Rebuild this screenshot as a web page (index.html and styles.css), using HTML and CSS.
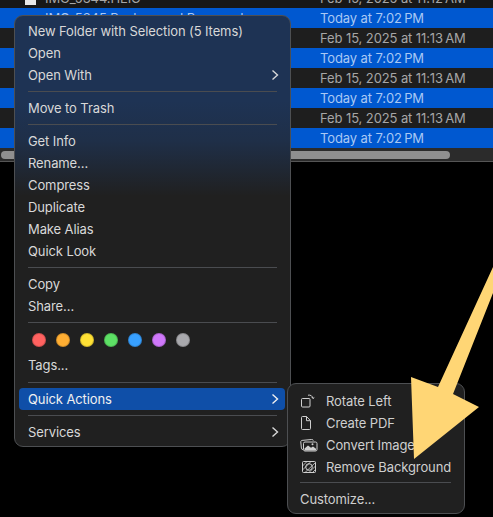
FILE: index.html
```html
<!DOCTYPE html>
<html>
	<head>
		<meta charset="utf-8" />
		<meta name="viewport" content="width=device-width" />
		<title>Finder context menu</title>
		<link rel="stylesheet" href="styles.css">
	</head>
	<body>
		<div class="files">
			<div class="row row-top"><span class="file-icon"></span><span class="name">IMG_5344.HEIC</span><span class="date">Feb 15, 2025 at 11:12&#8201;AM</span></div>
			<div class="row selected"><span class="name">IMG_5345 Background Removed</span><span class="date">Today at 7:02&#8201;PM</span></div>
			<div class="row"><span class="name"></span><span class="date">Feb 15, 2025 at 11:13&#8201;AM</span></div>
			<div class="row selected"><span class="name"></span><span class="date">Today at 7:02&#8201;PM</span></div>
			<div class="row"><span class="name"></span><span class="date">Feb 15, 2025 at 11:13&#8201;AM</span></div>
			<div class="row selected"><span class="name"></span><span class="date">Today at 7:02&#8201;PM</span></div>
			<div class="row"><span class="name"></span><span class="date">Feb 15, 2025 at 11:13&#8201;AM</span></div>
			<div class="row selected"><span class="name"></span><span class="date">Today at 7:02&#8201;PM</span></div>
			<div class="scrollbar"><div class="thumb"></div></div>
		</div>

		<div class="menu main-menu">
			<div class="item">New Folder with Selection (5 Items)</div>
			<div class="item">Open</div>
			<div class="item">Open With<svg class="chevron" viewBox="0 0 8 12"><path d="M1.5 1.5 6.5 6 1.5 10.5"/></svg></div>
			<hr>
			<div class="item">Move to Trash</div>
			<hr>
			<div class="item">Get Info</div>
			<div class="item">Rename...</div>
			<div class="item">Compress</div>
			<div class="item">Duplicate</div>
			<div class="item">Make Alias</div>
			<div class="item">Quick Look</div>
			<hr>
			<div class="item">Copy</div>
			<div class="item">Share...</div>
			<hr>
			<div class="tags">
				<span class="dot red"></span>
				<span class="dot orange"></span>
				<span class="dot yellow"></span>
				<span class="dot green"></span>
				<span class="dot blue"></span>
				<span class="dot purple"></span>
				<span class="dot gray"></span>
			</div>
			<div class="item">Tags...</div>
			<hr class="tags-rule">
			<div class="item active">Quick Actions<svg class="chevron" viewBox="0 0 8 12"><path d="M1.5 1.5 6.5 6 1.5 10.5"/></svg></div>
			<hr>
			<div class="item">Services<svg class="chevron" viewBox="0 0 8 12"><path d="M1.5 1.5 6.5 6 1.5 10.5"/></svg></div>
		</div>

		<div class="menu sub-menu">
			<div class="item">
				<span class="icon"><svg width="18" height="16" viewBox="0 0 18 16"><rect x="1.5" y="5.5" width="8.500" height="8.500" rx="1"/><path d="M8 2.200c2.600-.5 4.600.8 5 3.300M13 5.500l-1.200-1.300M13 5.500l1.300-1"/></svg></span>
				Rotate Left
			</div>
			<div class="item">
				<span class="icon"><svg width="18" height="16" viewBox="0 0 18 16"><path d="M1.500 2.500a1 1 0 0 1 1-1h4l4 4.200v7.800a1 1 0 0 1-1 1h-7a1 1 0 0 1-1-1zM6.500 1.500v4.200h4"/></svg></span>
				Create PDF
			</div>
			<div class="item">
				<span class="icon icon-wide"><svg width="18" height="16" viewBox="0 0 18 16"><path d="M3 12.500c-1 0-1.500-.4-1.600-1.300L.8 5c-.1-1 .4-1.500 1.300-1.600l9.500-.9c1-.1 1.500.3 1.700 1.100"/><rect x="3.500" y="5" width="13.500" height="9" rx="1.500"/><path class="fill" d="M4.500 13.500v-2l3.500-3 3 2.300 2-1.300 3 2.300v1.700z"/><circle class="fill" cx="12.500" cy="7.300" r="1"/></svg></span>
				Convert Image
			</div>
			<div class="item">
				<span class="icon"><svg width="18" height="16" viewBox="0 0 18 16"><rect x="2.500" y="2.500" width="13" height="11" rx="1"/><circle cx="9" cy="8" r="3.300"/><path class="thin" d="M2.500 7 7 2.500M2.500 11 11 2.500M5 13.500 15.500 3.500M9 13.500 15.500 7M12.500 13.500l3-3"/></svg></span>
				Remove Background
			</div>
			<hr class="sub-rule">
			<div class="item plain">Customize...</div>
		</div>

		<svg class="arrow" width="493" height="517" viewBox="0 0 493 517"><polygon points="493,267 493,293 453,394 479,407 414,459 411,377 438,387"/></svg>
	</body>
</html>
```

FILE: styles.css
```css
html, body {
	margin: 0;
	height: 517px;
	overflow: hidden;
	background: #000;
}
body {
	font-family: Inter, "Liberation Sans", sans-serif;
	font-size: 13px;
	letter-spacing: -0.1px;
}
.files {
	display: flex;
	flex-direction: column;
}
.row {
	display: flex;
	align-items: center;
	height: 20px;
	line-height: 20px;
	overflow: hidden;
	background: #1e1e1e;
	color: #a6a6a6;
	padding-left: 45px;
}
.row-top {
	height: 8px;
	align-items: flex-end;
	background: #171717;
}
.row.selected {
	background: #0058d0;
	color: #a9c8f4;
}
.name {
	width: 275px;
	flex: none;
}
.date {
	white-space: nowrap;
}
.file-icon {
	width: 11px;
	height: 5px;
	margin-left: -20px;
	margin-right: 9px;
	background: #e8e8e8;
	align-self: flex-start;
	flex: none;
}
.scrollbar {
	height: 14px;
	padding: 3px 0 0 1px;
	box-sizing: border-box;
	background: #2b2b2b;
	border-bottom: 1px solid #555;
}
.thumb {
	width: 449px;
	height: 8px;
	border-radius: 4px;
	background: #8f8f8f;
}
.menu {
	position: absolute;
	box-sizing: border-box;
	border: 1px solid #4d4f52;
	border-radius: 9px;
	color: #d8d8d8;
}
.main-menu {
	left: 14px;
	top: 15px;
	width: 277px;
	height: 432px;
	padding-top: 4px;
	background: linear-gradient(#1e3354 0, #1e3354 85px, #1f2f48 125px, #202020 180px);
}
.sub-menu {
	left: 287px;
	top: 383px;
	width: 178px;
	height: 131px;
	padding-top: 6px;
	background: #202020;
	color: #cfcfcf;
}
.item {
	display: flex;
	align-items: center;
	height: 22px;
	margin: 0 5px 0 4px;
	padding: 0 8px 0 9px;
	border-radius: 4px;
	white-space: nowrap;
}
.main-menu .item {
	justify-content: space-between;
}
.item.active {
	background: #0f4fa8;
	color: #f0f0f0;
}
.sub-menu .item {
	margin: 0;
	padding: 0 0 0 12px;
}
.icon {
	width: 26px;
	height: 16px;
	flex: none;
}
.icon svg {
	display: block;
	fill: none;
	stroke: #cfcfcf;
	stroke-width: 1;
}
.icon svg .fill {
	fill: #cfcfcf;
	stroke: none;
}
.icon svg .thin {
	stroke-width: .8;
}
.chevron {
	width: 8px;
	height: 12px;
	fill: none;
	stroke: currentColor;
	stroke-width: 1.4;
	margin-right: -2px;
}
hr {
	border: 0;
	height: 1px;
	margin: 5px 13px;
	background: #4a4c50;
}
.tags-rule {
	margin: 6px 13px 5px;
}
.sub-rule {
	margin: 4px 13px 5px 12px;
}
.tags {
	display: flex;
	gap: 10px;
	height: 21px;
	padding: 5px 0 0 17px;
}
.dot {
	width: 12px;
	height: 12px;
	border-radius: 50%;
	border: 1px solid rgba(0, 0, 0, .18);
}
.red { background: #ff6260; }
.orange { background: #ffae33; }
.yellow { background: #ffe135; }
.green { background: #5de065; }
.blue { background: #38a0ff; }
.purple { background: #cf78fa; }
.gray { background: #a9a9ad; }
.arrow {
	position: absolute;
	left: 0;
	top: 0;
	fill: #ffd675;
}
```
